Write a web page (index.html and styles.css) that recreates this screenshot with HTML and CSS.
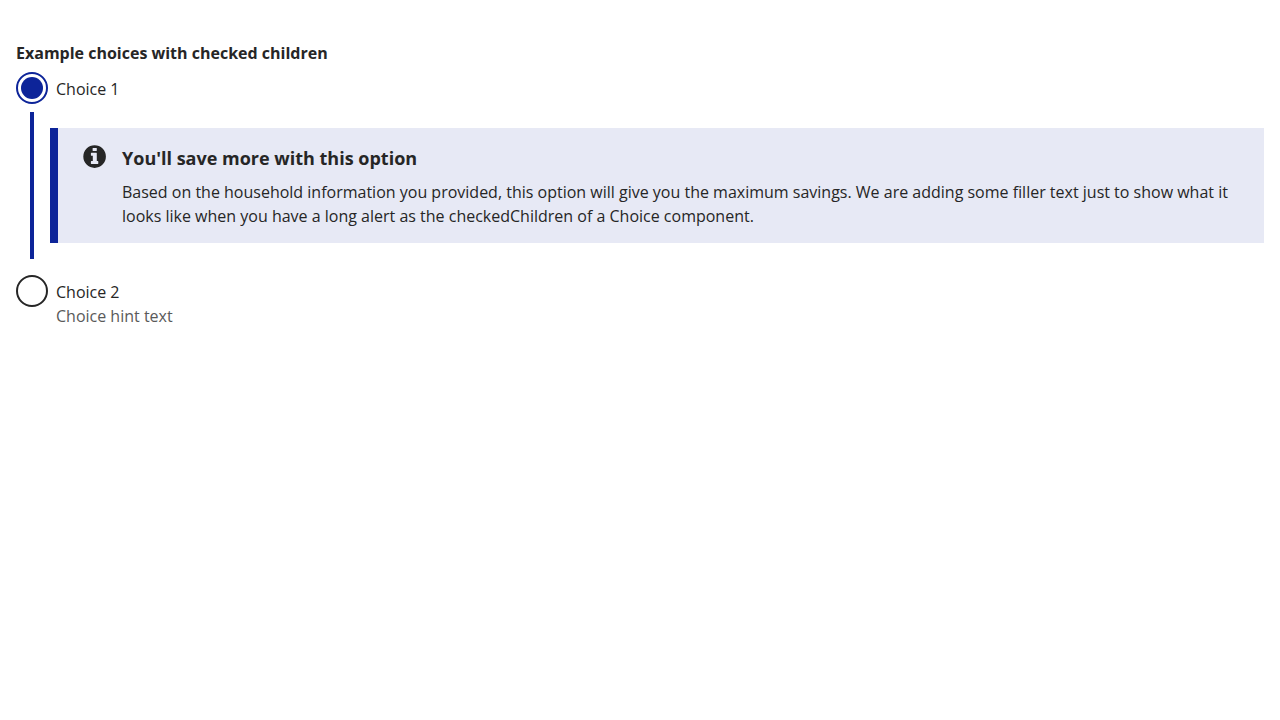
FILE: index.html
```html
<!DOCTYPE html>
<html lang="en">
<head>
<meta charset="utf-8">
<meta name="viewport" content="width=device-width, initial-scale=1">
<title>Example choices with checked children</title>
<link rel="stylesheet" href="styles.css">
</head>
<body>
<fieldset class="choices">
  <legend class="choices__legend">Example choices with checked children</legend>
  <div class="choice">
    <input class="choice__input" type="radio" name="choice" id="choice-1" value="1" checked>
    <label class="choice__label" for="choice-1">Choice 1</label>
  </div>
  <div class="choice__checked-child">
    <section class="alert" aria-labelledby="alert-heading">
      <svg class="alert__icon" viewBox="0 0 24 24" aria-hidden="true"><path fill="currentColor" fill-rule="evenodd" d="M12.6 1.3a11.3 11.3 0 1 0 0 22.6a11.3 11.3 0 0 0 0-22.6zM11 3.900h3.400q.4 0 .4.400v2.300q0 .4-.4.4H11q-.4 0-.4-.4V4.300q0-.4.4-.4zM9.300 8.800h5.100q.4 0 .4.4v7.800h1.100q.4 0 .4.4v2.100q0 .4-.4.4H9.300q-.4 0-.4-.4v-2.100q0-.4.4-.4h1.500v-5.300H9.300q-.4 0-.4-.4V9.200q0-.4.4-.4z"/></svg>
      <div class="alert__body">
        <h2 class="alert__heading" id="alert-heading">You'll save more with this option</h2>
        <p class="alert__text">Based on the household information you provided, this option will give you the maximum savings. We are adding some filler text just to show what it looks like when you have a long alert as the checkedChildren of a Choice component.</p>
      </div>
    </section>
  </div>
  <div class="choice">
    <input class="choice__input" type="radio" name="choice" id="choice-2" value="2" aria-describedby="choice-2-hint">
    <div class="choice__copy">
      <label class="choice__label" for="choice-2">Choice 2</label>
      <p class="choice__hint" id="choice-2-hint">Choice hint text</p>
    </div>
  </div>
</fieldset>
</body>
</html>
```
FILE: styles.css
```css
* {
  box-sizing: border-box;
}

body {
  margin: 0;
  padding: 16px;
  background: #fff;
  color: #262626;
  font: 16px/24px "Open Sans", sans-serif;
}

.choices {
  min-width: 0;
  margin: 26px 0 0;
  padding: 0;
  border: 0;
}

.choices__legend {
  padding: 0;
  font-weight: 700;
  line-height: 22px;
}

.choice {
  display: flex;
  align-items: flex-start;
  gap: 8px;
  padding: 8px 0;
}

.choice__input {
  flex: none;
  appearance: none;
  width: 32px;
  height: 32px;
  margin: 0;
  border: 2px solid #262626;
  border-radius: 50%;
  background: #fff;
}

.choice__input:checked {
  padding: 3px;
  border-color: #0d2499;
  background: #0d2499 content-box;
}

.choice__label {
  display: block;
  padding-top: 5px;
}

.choice__hint {
  margin: 0;
  color: #5a5a5a;
}

.choice__checked-child {
  margin: 0 0 8px 14px;
  padding: 16px 0 16px 16px;
  border-left: 4px solid #0d2499;
}

.alert {
  display: flex;
  gap: 16px;
  padding: 16px 16px 15px 24px;
  border-left: 8px solid #0d2499;
  background: #e7e9f5;
}

.alert__icon {
  flex: none;
  width: 24px;
  height: 24px;
}

.alert__heading {
  margin: 0 0 8px;
  font-size: 18px;
  line-height: 28px;
}

.alert__text {
  margin: 0;
}
```
